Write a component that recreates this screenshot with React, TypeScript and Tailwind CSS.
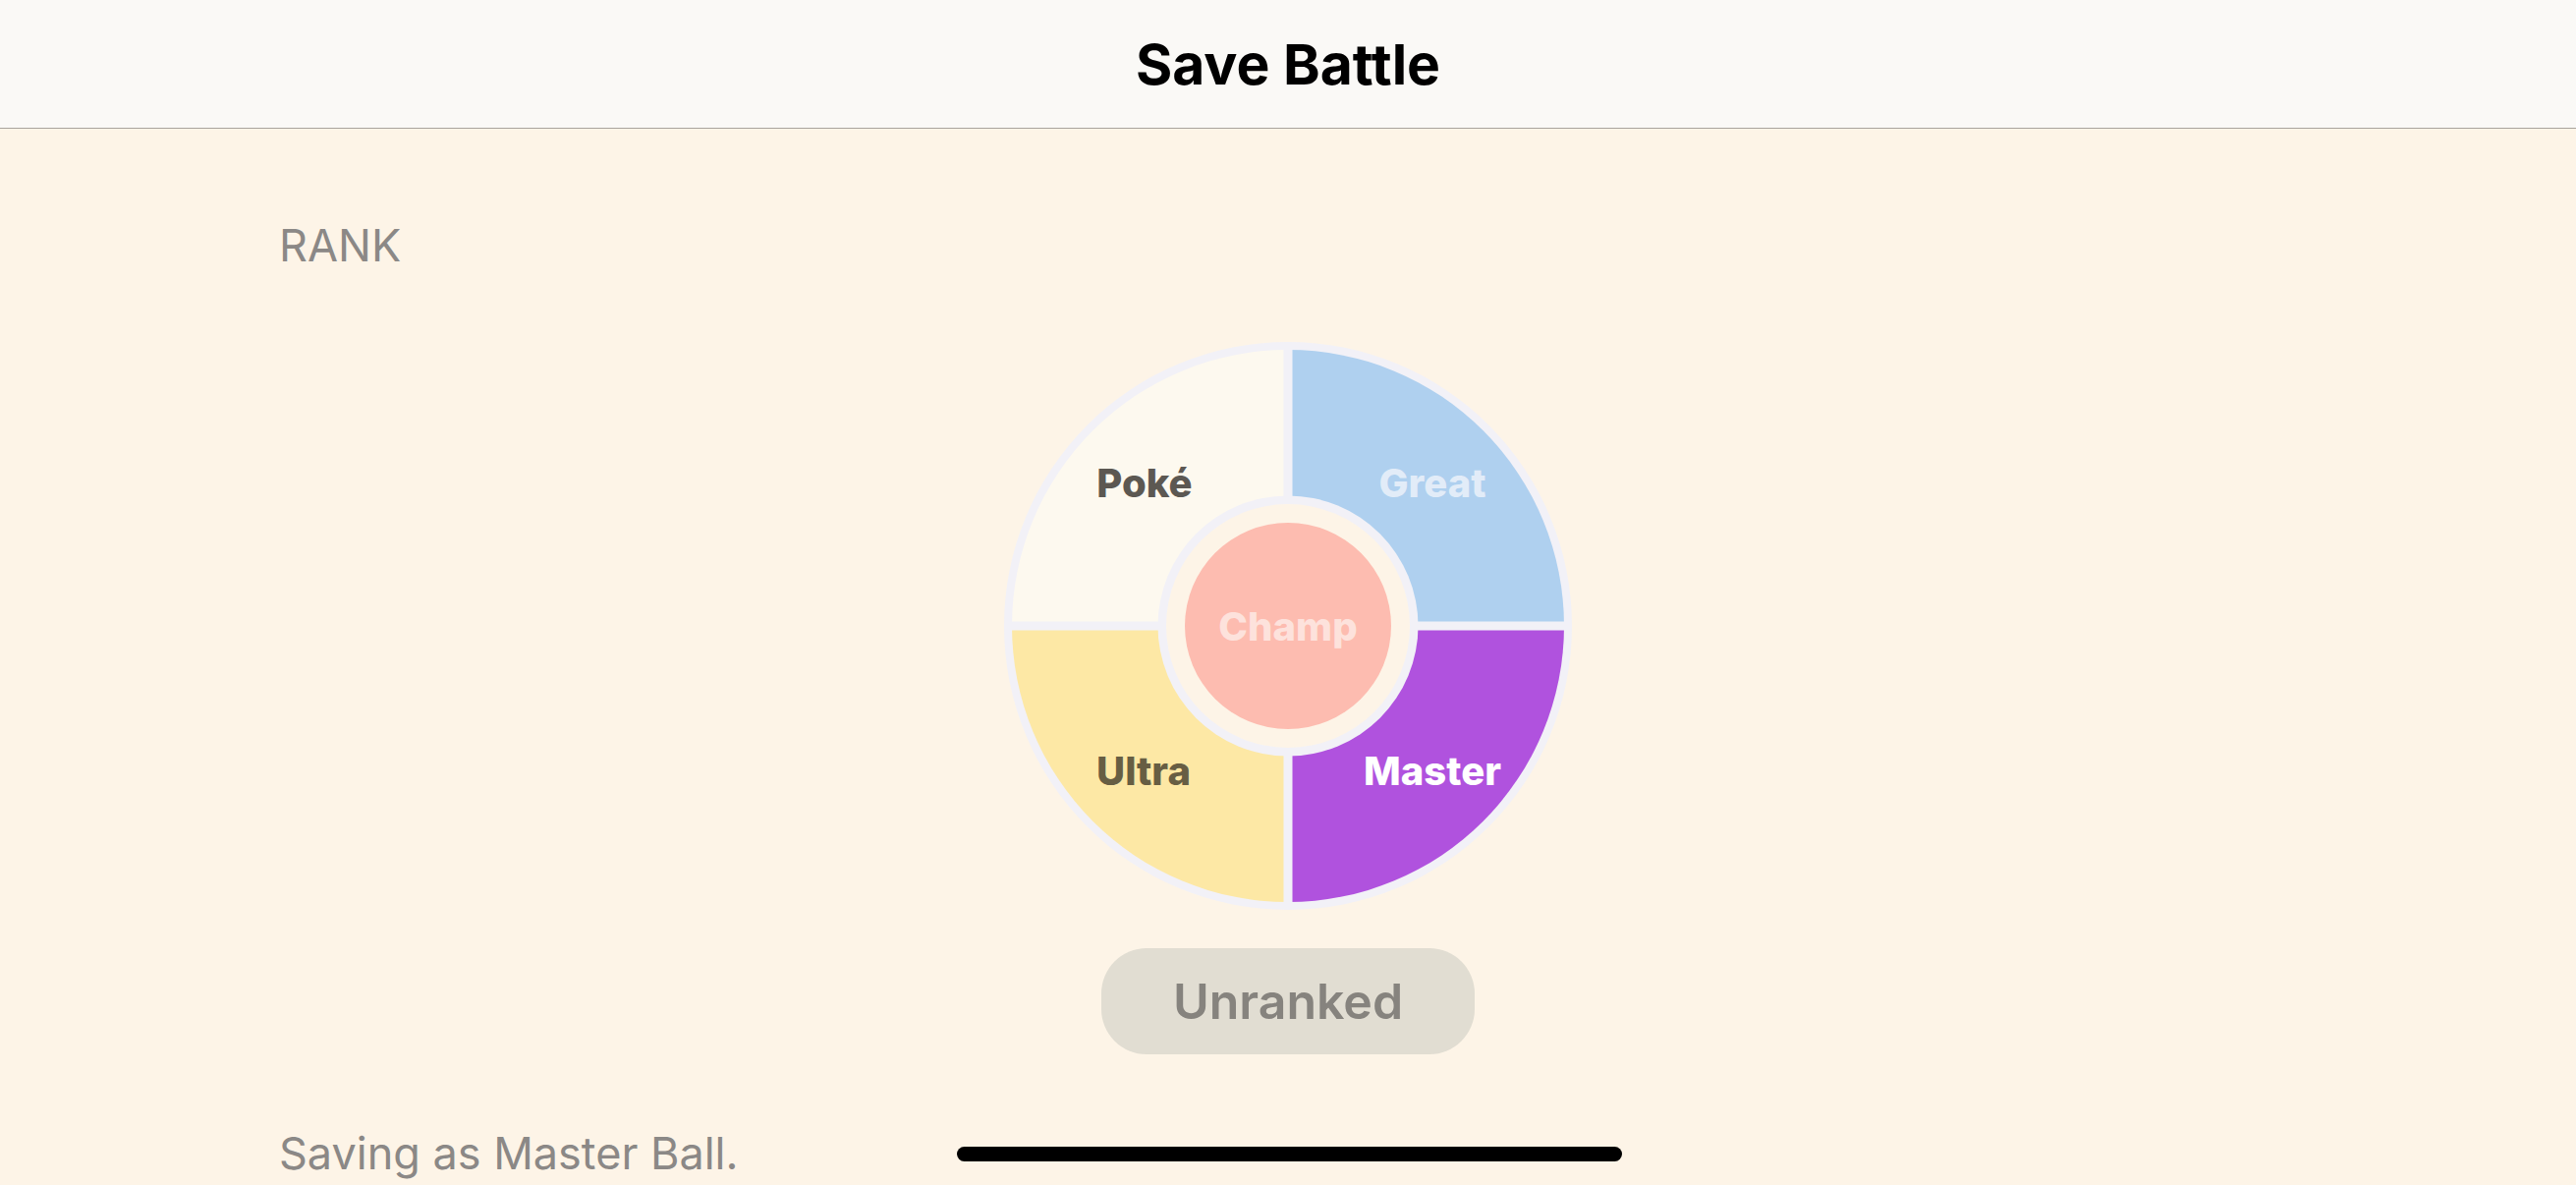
import React from "react";

function Wheel() {
  const R = 281;
  const font = "Inter, 'Noto Sans', sans-serif";
  return (
    <svg width={580} height={580} viewBox="-290 -290 580 580" className="block">
      <circle cx={0} cy={0} r={289} fill="#f2f1f7" />
      <path d={`M0 0 L${-R} 0 A${R} ${R} 0 0 1 0 ${-R} Z`} fill="#fdf9ef" />
      <path d={`M0 0 L0 ${-R} A${R} ${R} 0 0 1 ${R} 0 Z`} fill="#afd0ef" />
      <path d={`M0 0 L${R} 0 A${R} ${R} 0 0 1 0 ${R} Z`} fill="#b052de" />
      <path d={`M0 0 L0 ${R} A${R} ${R} 0 0 1 ${-R} 0 Z`} fill="#fde8a5" />
      <rect x={-4.5} y={-285} width={9} height={570} fill="#f2f1f7" />
      <rect x={-285} y={-4.5} width={570} height={9} fill="#f2f1f7" />
      <circle cx={0} cy={0} r={132.5} fill="#f2f1f7" />
      <circle cx={0} cy={0} r={124} fill="#fdf4e7" />
      <circle cx={0} cy={0} r={105} fill="#fdbcb0" />
      <g fontFamily={font} fontWeight={800} fontSize={40} textAnchor="middle" dominantBaseline="central">
        <text x={-146} y={-146} fill="#5c5852">Poké</text>
        <text x={147} y={-146} fill="#e2ecf8">Great</text>
        <text x={-147} y={147} fill="#675e43">Ultra</text>
        <text x={147} y={147} fill="#ffffff">Master</text>
        <text x={0} y={0} fill="#fde2dc">Champ</text>
      </g>
    </svg>
  );
}

export default function App() {
  return (
    <div
      className="relative w-[2622px] h-[1206px] overflow-hidden bg-[#fdf4e7]"
      style={{ fontFamily: "Inter, 'Noto Sans', sans-serif" }}
    >
      <header className="h-[131px] bg-[#faf9f6] border-b border-[#a8a49c] flex items-center justify-center">
        <h1 className="text-[57px] leading-none font-bold text-black">Save Battle</h1>
      </header>
      <main className="flex flex-col">
        <div className="pl-[284px] mt-[92px] text-[45px] leading-[54px] text-[#8b8886]">RANK</div>
        <div className="mt-[70px] flex justify-center">
          <Wheel />
        </div>
        <div className="mt-[38px] flex justify-center">
          <div className="w-[380px] h-[108px] rounded-[46px] bg-[#e1ddd2] flex items-center justify-center text-[50px] font-semibold text-[#86837e]">
            Unranked
          </div>
        </div>
        <div className="pl-[284px] mt-[74px] text-[45px] leading-[54px] text-[#8b8886]">
          Saving as Master Ball.
        </div>
      </main>
      <div className="absolute left-[974px] bottom-[24px] w-[677px] h-[15px] rounded-full bg-black" />
    </div>
  );
}
